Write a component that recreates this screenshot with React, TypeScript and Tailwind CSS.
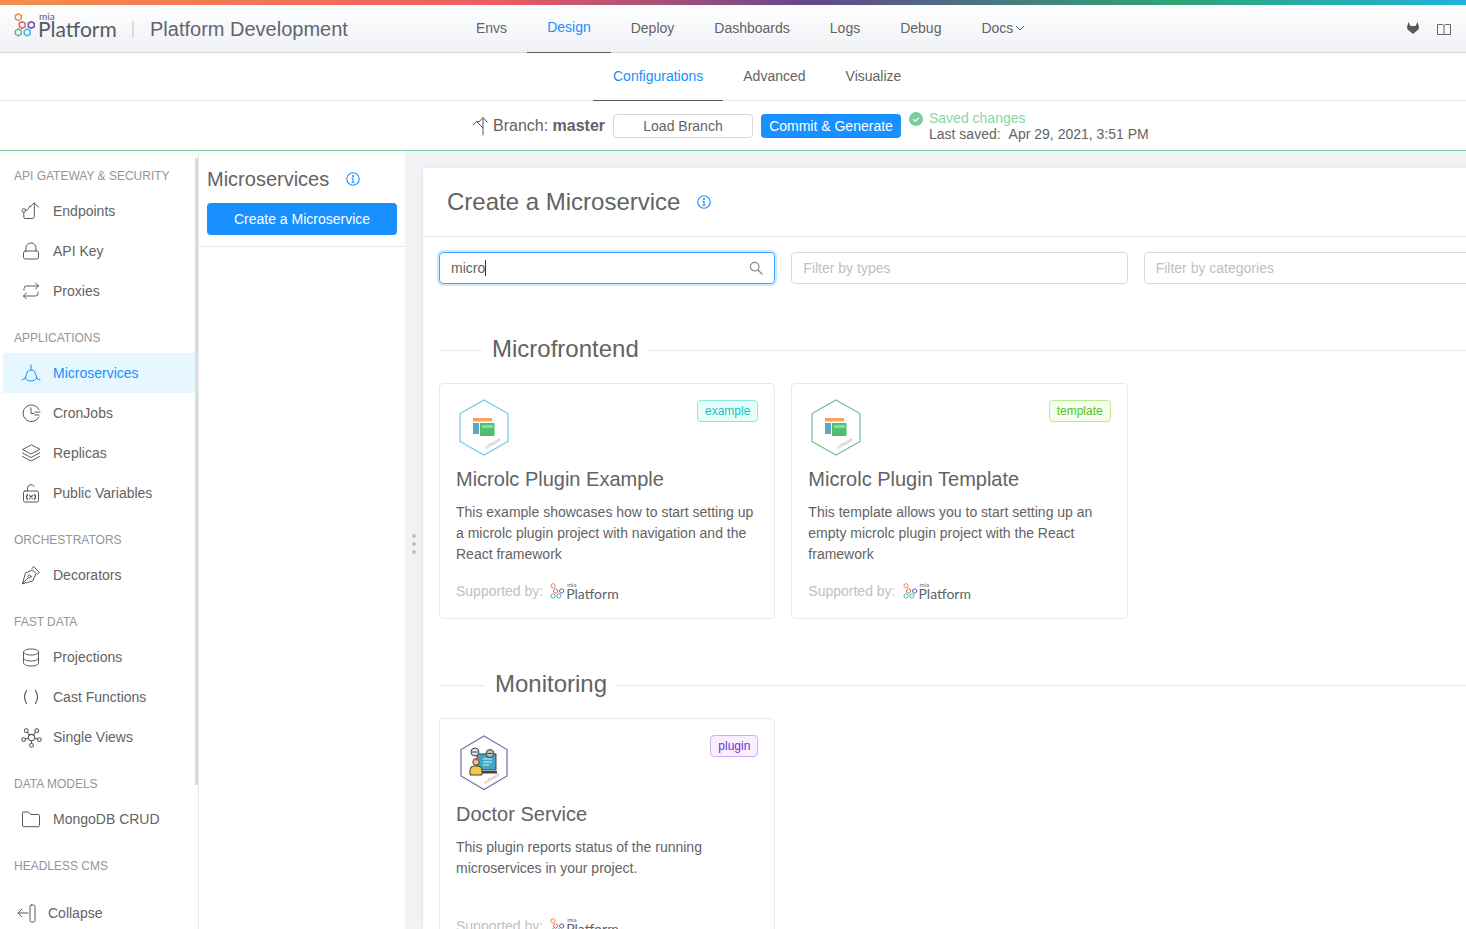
import React from "react";

const hexPts = (cx: number, cy: number, r: number) => {
  const p: string[] = [];
  for (let i = 0; i < 6; i++) {
    const a = (Math.PI / 3) * i - Math.PI / 2;
    p.push(`${(cx + r * Math.cos(a)).toFixed(2)},${(cy + r * Math.sin(a)).toFixed(2)}`);
  }
  return p.join(" ");
};

function HexMark({ className, sw = 1.5 }: { className: string; sw?: number }) {
  return (
    <svg viewBox="0 0 22 24" className={className} fill="none" strokeWidth={sw}>
      <polygon points={hexPts(4.3, 4.2, 3.4)} stroke="#ee8c4f" />
      <polygon points={hexPts(8.2, 12, 3.4)} stroke="#e0606a" />
      <polygon points={hexPts(17.3, 12, 3.4)} stroke="#6f4fa0" />
      <polygon points={hexPts(4.3, 19.4, 3.4)} stroke="#5bb98c" />
      <polygon points={hexPts(13.2, 19.4, 3.4)} stroke="#3fb6dc" />
    </svg>
  );
}

function Logo() {
  return (
    <div className="flex items-center w-[132px] pl-[14px] h-full shrink-0">
      <HexMark className="w-[22px] h-[24px] mt-[-8px] shrink-0" />
      <div className="relative ml-[2px] mt-[1px] text-[21px] leading-[24px] text-[#555b63] font-['Lato',sans-serif]">
        <span className="absolute left-[1px] top-[-6px] text-[10px] leading-[10px]">mia</span>
        Platform
      </div>
    </div>
  );
}

function SmallLogo() {
  return (
    <div className="flex items-center ml-[7px] mt-[5px]">
      <HexMark className="w-[15px] h-[16px] mt-[-5px]" sw={1.5} />
      <div className="relative ml-[1px] text-[14px] leading-[16px] text-[#5c6269] font-['Lato',sans-serif]">
        <span className="absolute left-[1px] top-[-4px] text-[6px] leading-[6px]">mia</span>
        Platform
      </div>
    </div>
  );
}

const ic = "w-[20px] h-[20px] shrink-0";

function Svg({ children, active, className }: { children: React.ReactNode; active?: boolean; className?: string }) {
  return (
    <svg viewBox="0 0 20 20" className={className ?? ic} fill="none" stroke={active ? "#1890ff" : "#595959"} strokeWidth="1" strokeLinecap="round" strokeLinejoin="round">
      {children}
    </svg>
  );
}

const icons: Record<string, () => React.ReactNode> = {
  endpoints: () => (
    <Svg>
      <circle cx="2.8" cy="9.500" r="1.800" />
      <path d="M2.800 11.500v4.500a1.500 1.500 0 0 0 1.500 1.500h7a2 2 0 0 0 2-2V2M9 6l4-4.200L17.500 6M4.600 9.500c2.400 0 3.600-3 4.400-4.500" />
    </Svg>
  ),
  lock: () => (
    <Svg>
      <rect x="2.500" y="10" width="15" height="8" rx="1.800" />
      <path d="M5 10V7a5 5 0 0 1 10 0v3" />
    </Svg>
  ),
  proxies: () => (
    <Svg>
      <path d="M3 9V7.500A2.500 2.500 0 0 1 5.500 5H17.500M14.500 2l3 3-3 3M17 11v1.500a2.500 2.500 0 0 1-2.500 2.500H2.500M5.500 12l-3 3 3 3" />
    </Svg>
  ),
  micro: () => (
    <Svg active>
      <path d="M10 2v5M1 17l4-2M19 17l-4-2M6.500 8.500 4 15a7.500 7.500 0 0 0 12 0L13.500 8.500a4.500 4.500 0 0 0-7 0Z" />
    </Svg>
  ),
  cron: () => (
    <Svg>
      <path d="M18 6.500A8.400 8.400 0 1 0 18 14" />
      <path d="M10 5v5.500h3M14 9h5M14 12h4" />
    </Svg>
  ),
  layers: () => (
    <Svg>
      <path d="M10 2 1.500 6.500 10 11l8.500-4.500ZM1.500 10l8.500 4.500 8.500-4.500M1.500 13.500 10 18l8.500-4.500" />
    </Svg>
  ),
  vars: () => (
    <Svg>
      <rect x="2.500" y="8" width="15" height="11" rx="1.400" />
      <path d="M6.500 8V5a3.500 3.500 0 0 1 6.600-1.500" />
      <path d="M6.500 11.500c-1.400 1.600-1.400 3.400 0 5M13.500 11.500c1.400 1.600 1.400 3.400 0 5M8.500 12.500l3 3M11.500 12.500l-3 3" strokeWidth="1.200" />
    </Svg>
  ),
  pen: () => (
    <Svg>
      <path d="M1.500 18.500 4.500 8l7-3 3.500 3.500-3 7ZM1.500 18.500l5.500-5.500M11 3.500 12.500 1.500 18.500 7.500 16.500 9" />
      <circle cx="8.500" cy="11.500" r="1.500" />
    </Svg>
  ),
  db: () => (
    <Svg>
      <path d="M2.500 5c0-1.800 3.200-3 7.500-3s7.500 1.200 7.500 3v11c0 1.800-3.200 3-7.500 3s-7.500-1.200-7.500-3ZM2.500 5c0 1.800 3.200 3 7.500 3s7.500-1.200 7.500-3M2.500 11c0 1.800 3.200 3 7.500 3s7.500-1.200 7.500-3" />
    </Svg>
  ),
  parens: () => (
    <Svg>
      <path d="M5.500 3.500c-2.300 3.800-2.300 9.200 0 13M14.500 3.500c2.300 3.800 2.300 9.200 0 13" strokeWidth="1.200" />
    </Svg>
  ),
  views: () => (
    <Svg className="w-[21px] h-[21px] shrink-0">
      <circle cx="10" cy="10" r="3" />
      <circle cx="5" cy="3.500" r="1.800" />
      <circle cx="15" cy="3.500" r="1.800" />
      <circle cx="2.500" cy="12" r="1.800" />
      <circle cx="17.500" cy="12" r="1.800" />
      <circle cx="10" cy="17.500" r="1.800" />
      <path d="M6 5l2.300 2.800M14 5l-2.300 2.800M4.200 11.500l2.900-.8M15.800 11.500l-2.900-.8M10 13v2.700" />
    </Svg>
  ),
  folder: () => (
    <Svg>
      <path d="M1.500 16.500V4a1 1 0 0 1 1-1h5l2 2.500h8a1 1 0 0 1 1 1v10a1.200 1.200 0 0 1-1.200 1.200H2.700a1.200 1.200 0 0 1-1.200-1.200Z" />
    </Svg>
  ),
};

type Item = { label: string; icon: string; active?: boolean };
const sections: { title: string; items: Item[] }[] = [
  { title: "API GATEWAY & SECURITY", items: [
    { label: "Endpoints", icon: "endpoints" },
    { label: "API Key", icon: "lock" },
    { label: "Proxies", icon: "proxies" },
  ] },
  { title: "APPLICATIONS", items: [
    { label: "Microservices", icon: "micro", active: true },
    { label: "CronJobs", icon: "cron" },
    { label: "Replicas", icon: "layers" },
    { label: "Public Variables", icon: "vars" },
  ] },
  { title: "ORCHESTRATORS", items: [{ label: "Decorators", icon: "pen" }] },
  { title: "FAST DATA", items: [
    { label: "Projections", icon: "db" },
    { label: "Cast Functions", icon: "parens" },
    { label: "Single Views", icon: "views" },
  ] },
  { title: "DATA MODELS", items: [{ label: "MongoDB CRUD", icon: "folder" }] },
  { title: "HEADLESS CMS", items: [] },
];

function Info({ size = 14 }: { size?: number }) {
  return (
    <svg width={size} height={size} viewBox="0 0 14 14" fill="none" stroke="#1890ff" strokeWidth="1.100" strokeLinecap="round">
      <circle cx="7" cy="7" r="6.200" />
      <path d="M7 6.200v4M5.900 10.200h2.200M5.900 6.200H7" />
      <circle cx="7" cy="4" r="0.500" fill="#1890ff" />
    </svg>
  );
}

function CardIconMf({ stroke }: { stroke: string }) {
  return (
    <svg width="50" height="57" viewBox="0 0 50 57" fill="none">
      <polygon points="25,1 49,14.500 49,42.500 25,56 1,42.500 1,14.500" stroke={stroke} strokeWidth="1.200" fill="#fff" />
      <rect x="14" y="19" width="19" height="3.500" fill="#f5a55f" />
      <rect x="14" y="24" width="6" height="11" fill="#59a9c0" />
      <rect x="21" y="24" width="14.500" height="13" fill="#4dbe72" />
      <rect x="23" y="26" width="11" height="3" fill="#8fd8a6" />
      <text x="27" y="50" fontSize="4.500" fill="#b5a5a5" transform="rotate(-30 27 50)" fontFamily="Liberation Sans, sans-serif">software</text>
    </svg>
  );
}

function CardIconDoctor() {
  return (
    <svg width="50" height="57" viewBox="0 0 50 57" fill="none">
      <polygon points="25,2 48,15.500 48,42 25,55.500 2,42 2,15.500" stroke="#7a68ab" strokeWidth="1.200" fill="#fff" />
      <rect x="18" y="20" width="19" height="16" fill="#3fa8c9" stroke="#333" strokeWidth="0.900" />
      <path d="M24 25h9M24 28h9M24 31h6" stroke="#d7eef5" strokeWidth="1" />
      <circle cx="16" cy="18" r="4" fill="#ddd" stroke="#333" strokeWidth="0.900" />
      <circle cx="31" cy="19.500" r="4" fill="#bbb" stroke="#333" strokeWidth="0.900" />
      <path d="M13 18h6M28 19.500h6" stroke="#333" strokeWidth="0.800" />
      <circle cx="17" cy="28" r="3.200" fill="#f6c58f" stroke="#333" strokeWidth="0.900" />
      <path d="M11 41v-5a4 4 0 0 1 4-4h4a4 4 0 0 1 4 4v5Z" fill="#f2c94c" stroke="#333" strokeWidth="0.900" />
      <path d="M14 25.500h6" stroke="#d9534f" strokeWidth="1.800" />
      <rect x="23" y="37" width="15" height="2.500" fill="#444" />
      <text x="26" y="50" fontSize="4.500" fill="#b5a5a5" transform="rotate(-30 26 50)" fontFamily="Liberation Sans, sans-serif">software</text>
    </svg>
  );
}

type Card = { title: string; lines: string[]; tag: string; tagCls: string; icon: React.ReactNode };

function PluginCard({ c }: { c: Card }) {
  return (
    <div className="h-[236px] bg-white border border-[#e8e8e8] rounded-[4px] pt-[16px] px-[16px] flex flex-col">
      <div className="flex justify-between items-start h-[56px]">
        <div className="ml-[3px] mt-[-1px]">{c.icon}</div>
        <span className={`h-[22px] px-[7px] leading-[20px] text-[12px] border rounded-[4px] ${c.tagCls}`}>{c.tag}</span>
      </div>
      <div className="mt-[8px] text-[20px] leading-[30px] text-[#636363]">{c.title}</div>
      <div className="mt-[8px] text-[14px] leading-[21px] text-[#636363]">
        {c.lines.map((l) => (
          <div key={l}>{l}</div>
        ))}
      </div>
      <div className="mt-auto mb-[16px] flex items-center text-[14px] leading-[22px] text-[#bfbfbf]">
        Supported by:
        <SmallLogo />
      </div>
    </div>
  );
}

function Section({ title, left, children }: { title: string; left: number; children: React.ReactNode }) {
  return (
    <section>
      <div className="flex items-center h-[36px] gap-[10px]">
        <div className="h-px bg-[#e8e8e8] mt-[2px]" style={{ width: left }} />
        <h2 className="text-[24px] leading-[36px] text-[#636363] whitespace-nowrap">{title}</h2>
        <div className="h-px bg-[#e8e8e8] flex-1 mt-[2px]" />
      </div>
      <div className="grid grid-cols-3 gap-[16px] mt-[16px]">{children}</div>
    </section>
  );
}

export default function App() {
  return (
    <div className="w-[1466px] h-[929px] overflow-hidden flex flex-col bg-[#f0f2f5] font-['Liberation_Sans',Arial,sans-serif] text-[14px] text-[#636363]">
      <div className="h-[5px] shrink-0 bg-[linear-gradient(90deg,#f58f4a_0%,#ee5c62_34%,#64478c_55%,#2fa574_80%,#1fb2dc_100%)]" />
      <header className="h-[48px] shrink-0 flex bg-[linear-gradient(180deg,#ffffff,#f0f1f5)] border-b border-[#d9d9d9]">
        <div className="w-[456px] flex items-center shrink-0">
          <Logo />
          <div className="w-[2px] h-[16px] bg-[#d9d9d9] mr-[16px]" />
          <div className="text-[20px] leading-[28px] text-[#5f6670]">Platform Development</div>
        </div>
        <nav className="flex">
          {["Envs", "Design", "Deploy", "Dashboards", "Logs", "Debug", "Docs"].map((n) => (
            <div key={n} className={`px-[20px] pb-[2px] flex items-center h-[48px] ${n === "Design" ? "text-[#1890ff] border-b border-[#595959]" : "text-[#636363]"}`}>
              {n}
              {n === "Docs" && (
                <svg width="10" height="10" viewBox="0 0 10 10" fill="none" stroke="#595959" strokeWidth="1" className="ml-[2px]">
                  <path d="M1 3l4 4 4-4" />
                </svg>
              )}
            </div>
          ))}
        </nav>
        <div className="ml-auto flex items-center pr-[15px] gap-[18px]">
          <svg width="12" height="12" viewBox="0 0 12 12" fill="#595959" className="mb-[2px]">
            <path d="M0 5 1.500 0 3.500 4h5L10.500 0 12 5l-.5 2.500L6 12 .5 7.500Z" />
          </svg>
          <svg width="14" height="12" viewBox="0 0 14 12" fill="none" stroke="#6b6b6b" strokeWidth="1" className="mt-[1px]">
            <path d="M.5 1.500h5L7 2.500l1.500-1h5v10H.5ZM7 2.500v9" />
          </svg>
        </div>
      </header>
      <div className="h-[48px] shrink-0 bg-white border-b border-[#e8e8e8] flex pl-[593px]">
        <div className="px-[20px] flex items-center h-[48px] text-[#1890ff] border-b border-[#595959]">Configurations</div>
        <div className="px-[20px] flex items-center">Advanced</div>
        <div className="px-[20px] flex items-center">Visualize</div>
      </div>
      <div className="h-[50px] shrink-0 bg-white border-b border-[#7fcf9f] flex pl-[472px] items-center">
        <svg width="17" height="20" viewBox="0 0 17 20" fill="none" stroke="#595959" strokeWidth="1" strokeLinecap="round" strokeLinejoin="round" className="mr-[4px]">
          <path d="M11 19V2M7 6l4-4.500L15 6M11 12 4.500 5.500M1 9 4.500 5.500l2 0" />
        </svg>
        <span className="text-[16px] leading-[24px] w-[116px]">Branch: <b>master</b></span>
        <button className="ml-[4px] w-[140px] h-[24px] bg-white border border-[#d9d9d9] rounded-[4px] text-[14px] text-[#636363] leading-[22px]">Load Branch</button>
        <button className="ml-[8px] w-[140px] h-[24px] bg-[#1890ff] rounded-[4px] text-[14px] text-white leading-[22px]">Commit &amp; Generate</button>
        <svg width="14" height="14" viewBox="0 0 14 14" className="ml-[8px] mb-[13px]">
          <circle cx="7" cy="7" r="7" fill="#7ccb9f" />
          <path d="M4 7.200l2.200 2.200L10 5.300" fill="none" stroke="#fff" strokeWidth="1.200" />
        </svg>
        <div className="ml-[6px] leading-[16px] mt-[1px]">
          <div className="text-[#87d6a8]">Saved changes</div>
          <div>Last saved:<span className="ml-[8px]">Apr 29, 2021, 3:51 PM</span></div>
        </div>
      </div>
      <div className="flex-1 flex min-h-0">
        <aside className="w-[199px] shrink-0 bg-white border-r border-[#e8e8e8] relative flex flex-col">
          <div className="flex-1 pt-[8px] pl-[3px] pr-[3px] overflow-hidden">
            {sections.map((s, i) => (
              <div key={s.title} className={i ? "mt-[10px]" : ""}>
                <div className="h-[32px] leading-[34px] pl-[11px] text-[12px] text-[#959595] whitespace-nowrap">{s.title}</div>
                {s.items.map((it) => (
                  <div key={it.label} className={`h-[40px] flex items-center ${it.active ? "bg-[#e6f7ff] text-[#1890ff]" : ""}`}>
                    <div className="w-[50px] flex justify-center pl-[14px] pr-[8px]">{icons[it.icon]()}</div>
                    {it.label}
                  </div>
                ))}
              </div>
            ))}
          </div>
          <div className="absolute right-0 top-[7px] w-[3px] h-[627px] bg-[#dcdcdc]" />
          <div className="absolute left-0 right-0 bottom-0 h-[36px] bg-white flex items-center pl-[17px] pt-[4px]">
            <svg width="20" height="20" viewBox="0 0 20 20" fill="none" stroke="#595959" strokeWidth="1" strokeLinecap="round" strokeLinejoin="round" className="mr-[11px]">
              <path d="M1 10h10M5 6l-4 4 4 4" />
              <rect x="13" y="2" width="5" height="17" rx="1.500" />
            </svg>
            Collapse
          </div>
        </aside>
        <div className="w-[206px] shrink-0 bg-white">
          <div className="h-[96px] px-[8px] border-b border-[#e8e8e8] pt-[14px]">
            <div className="flex items-center h-[28px] text-[20px] leading-[28px]">
              Microservices
              <span className="ml-[17px] flex"><Info /></span>
            </div>
            <button className="mt-[10px] w-[190px] h-[32px] rounded-[4px] bg-[#1890ff] text-white text-[14px]">Create a Microservice</button>
          </div>
        </div>
        <div className="w-[18px] shrink-0 flex flex-col items-center justify-center gap-[4px] pt-[8px]">
          <div className="w-[4px] h-[4px] rounded-full bg-[#bfbfbf]" />
          <div className="w-[4px] h-[4px] rounded-full bg-[#bfbfbf]" />
          <div className="w-[4px] h-[4px] rounded-full bg-[#bfbfbf]" />
        </div>
        <main className="w-[1073px] shrink-0 mt-[17px] bg-white shadow-[0_1px_4px_rgba(0,0,0,0.08)] rounded-tl-[4px]">
          <div className="h-[69px] border-b border-[#e8e8e8] pl-[24px] flex items-center">
            <h1 className="text-[24px] leading-[32px]">Create a Microservice</h1>
            <span className="ml-[17px] flex"><Info /></span>
          </div>
          <div className="px-[16px] pt-[15px]">
            <div className="grid grid-cols-3 gap-[16px]">
              <div className="h-[32px] border border-[#40a9ff] rounded-[4px] shadow-[0_0_0_2px_rgba(24,144,255,0.2)] flex items-center px-[11px] justify-between">
                <span className="text-[#636363] flex items-center">micro<span className="w-px h-[16px] bg-[#333]" /></span>
                <svg width="14" height="14" viewBox="0 0 14 14" fill="none" stroke="#8c8c8c" strokeWidth="1.200" strokeLinecap="round">
                  <circle cx="5.700" cy="5.700" r="4.300" />
                  <path d="M9 9l4 4" />
                </svg>
              </div>
              <div className="h-[32px] border border-[#d9d9d9] rounded-[4px] flex items-center px-[11px] text-[#bfbfbf]">Filter by types</div>
              <div className="h-[32px] border border-[#d9d9d9] rounded-[4px] flex items-center px-[11px] text-[#bfbfbf]">Filter by categories</div>
            </div>
            <div className="mt-[47px]">
              <Section title="Microfrontend" left={43}>
                <PluginCard c={{ title: "Microlc Plugin Example", lines: ["This example showcases how to start setting up", "a microlc plugin project with navigation and the", "React framework"], tag: "example", tagCls: "bg-[#e6fffb] border-[#87e8de] text-[#13c2c2]", icon: <CardIconMf stroke="#6fc8e6" /> }} />
                <PluginCard c={{ title: "Microlc Plugin Template", lines: ["This template allows you to start setting up an", "empty microlc plugin project with the React", "framework"], tag: "template", tagCls: "bg-[#f6ffed] border-[#b7eb8f] text-[#52c41a]", icon: <CardIconMf stroke="#6fbf94" /> }} />
              </Section>
            </div>
            <div className="mt-[47px]">
              <Section title="Monitoring" left={46}>
                <PluginCard c={{ title: "Doctor Service", lines: ["This plugin reports status of the running", "microservices in your project."], tag: "plugin", tagCls: "bg-[#f9f0ff] border-[#d3adf7] text-[#722ed1]", icon: <CardIconDoctor /> }} />
              </Section>
            </div>
          </div>
        </main>
      </div>
    </div>
  );
}
